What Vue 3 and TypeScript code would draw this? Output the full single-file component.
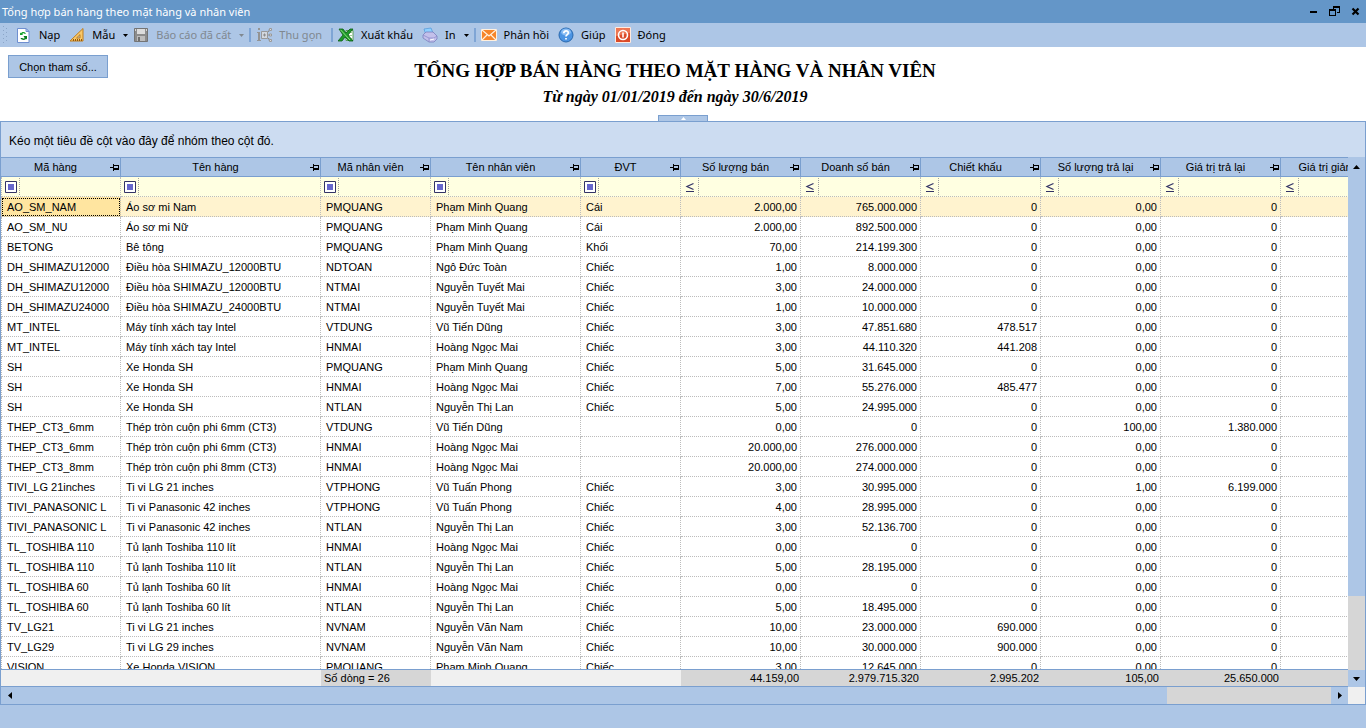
<script setup lang="ts">
interface ToolItem {
  id: string
  label: string
  caret?: boolean
  disabled?: boolean
  separator?: boolean
}
interface Column {
  key: string
  label: string
  width: number
  numeric?: boolean
}
type Row = string[]

const tools: ToolItem[] = [
  { id: 'reload', label: 'Nạp' },
  { id: 'template', label: 'Mẫu', caret: true },
  { id: 'saved', label: 'Báo cáo đã cất', caret: true, disabled: true },
  { id: 'collapse', label: 'Thu gọn', disabled: true, separator: true },
  { id: 'export', label: 'Xuất khẩu', separator: true },
  { id: 'print', label: 'In', caret: true },
  { id: 'feedback', label: 'Phản hồi', separator: true },
  { id: 'help', label: 'Giúp' },
  { id: 'close', label: 'Đóng' },
]

const columns: Column[] = [
  { key: 'item', label: 'Mã hàng', width: 120 },
  { key: 'name', label: 'Tên hàng', width: 200 },
  { key: 'staff', label: 'Mã nhân viên', width: 110 },
  { key: 'staffName', label: 'Tên nhân viên', width: 150 },
  { key: 'unit', label: 'ĐVT', width: 100 },
  { key: 'qty', label: 'Số lượng bán', width: 120, numeric: true },
  { key: 'sales', label: 'Doanh số bán', width: 120, numeric: true },
  { key: 'discount', label: 'Chiết khấu', width: 120, numeric: true },
  { key: 'retQty', label: 'Số lượng trả lại', width: 120, numeric: true },
  { key: 'retValue', label: 'Giá trị trả lại', width: 120, numeric: true },
  { key: 'reduction', label: 'Giá trị giảm giá', width: 120, numeric: true },
]

const source = `AO_SM_NAM|Áo sơ mi Nam|PMQUANG|Phạm Minh Quang|Cái|2.000,00|765.000.000|0|0,00|0
AO_SM_NU|Áo sơ mi Nữ|PMQUANG|Phạm Minh Quang|Cái|2.000,00|892.500.000|0|0,00|0
BETONG|Bê tông|PMQUANG|Phạm Minh Quang|Khối|70,00|214.199.300|0|0,00|0
DH_SHIMAZU12000|Điều hòa SHIMAZU_12000BTU|NDTOAN|Ngô Đức Toàn|Chiếc|1,00|8.000.000|0|0,00|0
DH_SHIMAZU12000|Điều hòa SHIMAZU_12000BTU|NTMAI|Nguyễn Tuyết Mai|Chiếc|3,00|24.000.000|0|0,00|0
DH_SHIMAZU24000|Điều hòa SHIMAZU_24000BTU|NTMAI|Nguyễn Tuyết Mai|Chiếc|1,00|10.000.000|0|0,00|0
MT_INTEL|Máy tính xách tay Intel|VTDUNG|Vũ Tiến Dũng|Chiếc|3,00|47.851.680|478.517|0,00|0
MT_INTEL|Máy tính xách tay Intel|HNMAI|Hoàng Ngọc Mai|Chiếc|3,00|44.110.320|441.208|0,00|0
SH|Xe Honda SH|PMQUANG|Phạm Minh Quang|Chiếc|5,00|31.645.000|0|0,00|0
SH|Xe Honda SH|HNMAI|Hoàng Ngọc Mai|Chiếc|7,00|55.276.000|485.477|0,00|0
SH|Xe Honda SH|NTLAN|Nguyễn Thị Lan|Chiếc|5,00|24.995.000|0|0,00|0
THEP_CT3_6mm|Thép tròn cuộn phi 6mm (CT3)|VTDUNG|Vũ Tiến Dũng||0,00|0|0|100,00|1.380.000
THEP_CT3_6mm|Thép tròn cuộn phi 6mm (CT3)|HNMAI|Hoàng Ngọc Mai||20.000,00|276.000.000|0|0,00|0
THEP_CT3_8mm|Thép tròn cuộn phi 8mm (CT3)|HNMAI|Hoàng Ngọc Mai||20.000,00|274.000.000|0|0,00|0
TIVI_LG 21inches|Ti vi LG 21 inches|VTPHONG|Vũ Tuấn Phong|Chiếc|3,00|30.995.000|0|1,00|6.199.000
TIVI_PANASONIC L|Ti vi Panasonic 42 inches|VTPHONG|Vũ Tuấn Phong|Chiếc|4,00|28.995.000|0|0,00|0
TIVI_PANASONIC L|Ti vi Panasonic 42 inches|NTLAN|Nguyễn Thị Lan|Chiếc|3,00|52.136.700|0|0,00|0
TL_TOSHIBA 110|Tủ lạnh Toshiba 110 lít|HNMAI|Hoàng Ngọc Mai|Chiếc|0,00|0|0|0,00|0
TL_TOSHIBA 110|Tủ lạnh Toshiba 110 lít|NTLAN|Nguyễn Thị Lan|Chiếc|5,00|28.195.000|0|0,00|0
TL_TOSHIBA 60|Tủ lạnh Toshiba 60 lít|HNMAI|Hoàng Ngọc Mai|Chiếc|0,00|0|0|0,00|0
TL_TOSHIBA 60|Tủ lạnh Toshiba 60 lít|NTLAN|Nguyễn Thị Lan|Chiếc|5,00|18.495.000|0|0,00|0
TV_LG21|Ti vi LG 21 inches|NVNAM|Nguyễn Văn Nam|Chiếc|10,00|23.000.000|690.000|0,00|0
TV_LG29|Ti vi LG 29 inches|NVNAM|Nguyễn Văn Nam|Chiếc|10,00|30.000.000|900.000|0,00|0
VISION|Xe Honda VISION|PMQUANG|Phạm Minh Quang|Chiếc|3,00|12.645.000|0|0,00|0`

const rows: Row[] = source.split('\n').map((line) => [...line.split('|'), ''])
const totals: Row = ['', '', 'Số dòng = 26', '', '', '44.159,00', '2.979.715.320', '2.995.202', '105,00', '25.650.000', '']
</script>

<template>
  <main class="window">
    <header class="titlebar">
      <span class="caption">Tổng hợp bán hàng theo mặt hàng và nhân viên</span>
      <button class="win" type="button" aria-label="Thu nhỏ">
        <svg width="11" height="11" viewBox="0 0 11 11"><path d="M2 5h7v2H2z" /></svg>
      </button>
      <button class="win" type="button" aria-label="Khôi phục">
        <svg width="11" height="11" viewBox="0 0 11 11"><path fill-rule="evenodd" d="M4 0h7v7H8V6h2V2H5v1H4zM0 3h7v7H0zM1 5v4h5V5z" /></svg>
      </button>
      <button class="win" type="button" aria-label="Đóng cửa sổ">
        <svg width="11" height="11" viewBox="0 0 11 11"><path d="M2.500 2.500L8.500 8.500M8.500 2.500L2.500 8.500" stroke="#000" stroke-width="2.200" /></svg>
      </button>
    </header>

    <nav class="toolbar" aria-label="Thanh công cụ">
      <svg class="grip" width="8" height="20" viewBox="0 0 8 20" fill="#8ba5c8">
        <path d="M3 1h1v1H3zM6 3h1v1H6zM3 5h1v1H3zM6 7h1v1H6zM3 9h1v1H3zM6 11h1v1H6zM3 13h1v1H3zM6 15h1v1H6zM3 17h1v1H3z" />
      </svg>
      <template v-for="t in tools" :key="t.id">
        <span v-if="t.separator" class="sep"></span>
        <button type="button" class="tool" :class="{ drop: t.caret }" :disabled="t.disabled">
          <svg class="icon" width="16" height="16" viewBox="0 0 16 16">
            <template v-if="t.id === 'reload'">
              <path d="M1.500 1.500h8.500l3 3v11H1.500z" fill="#fff" stroke="#6f8fd0" />
              <path d="M10 1.500v3h3z" fill="#c4d6f4" stroke="#6f8fd0" />
              <path d="M4 8V5.500l1 .8C6 4.600 9 4.600 10 6.800H8.300C7.500 6 6.600 6.300 6.300 7L7 8z" fill="#12a02c" />
              <path d="M11 9v3.500l-1-.8c-1 1.700-4.500 1.700-5.500-.8h1.900c.7.9 1.800.7 2.200 0L7.500 9z" fill="#067c1e" />
            </template>
            <template v-else-if="t.id === 'template'">
              <path d="M1 14L14 1.500V14z" fill="#f8c869" stroke="#c07d1b" />
              <path d="M7.500 11L11 7.600V11z" fill="#adc6e6" stroke="#c07d1b" />
              <path d="M4.500 14v-2M6.500 14v-2M8.500 14v-2M10.500 14v-2M12.500 14v-2" stroke="#93570a" />
            </template>
            <template v-else-if="t.id === 'saved'">
              <path d="M1.500 1.500h13v13h-13z" fill="#8c8c8c" stroke="#747474" />
              <path d="M4 2h8v5H4z" fill="#dcdcdc" />
              <path d="M4 9h8v5H4z" fill="#bdbdbd" />
              <path d="M5 10h2v4H5z" fill="#6f6f6f" />
              <path d="M2 2h1v2H2zM13 2h1v2h-1z" fill="#d5d5d5" />
            </template>
            <template v-else-if="t.id === 'collapse'">
              <path d="M2 1h2v2H2zM1 5h3v8h1v1H1v-1h1V6H1z" fill="#949494" />
              <path d="M5.500 4.500h6v7h-6z" fill="#d3d8df" stroke="#999" />
              <path d="M7 8h3M8.500 6.500v3M12 8h1.500M12 4.500h1V2.500h1M12 11.500h1v2h1" fill="none" stroke="#8c8c8c" />
              <path d="M13.500 1.500h2v2h-2zM13.500 7h2v2h-2zM13.500 12.500h2v2h-2z" fill="#ddd" stroke="#999" />
            </template>
            <template v-else-if="t.id === 'export'">
              <path d="M8 3.500h7v10H8z" fill="#fff" stroke="#5a9e5a" />
              <path d="M9 5.500h5M9 8.500h5M9 11.500h5" stroke="#9fcf9a" />
              <path d="M1 2h4l3 4 4-4h3l-5 6 5 6h-4l-4-4-3 4H0l5-6z" fill="#1f9a2b" stroke="#0b5e14" stroke-width=".8" />
              <path d="M2.500 2.800L12 13" stroke="#8be07e" />
            </template>
            <template v-else-if="t.id === 'print'">
              <path d="M2 2l7-1 2 5-7 2z" fill="#8fd0ff" stroke="#5b9ddb" stroke-width=".8" />
              <path d="M1 8l3-3 7 0 4 4v3l-3 3H7l-6-4z" fill="#c3c0ea" stroke="#7a7dbd" stroke-width=".8" />
              <path d="M1 8l6 3h5l3-2M7 11v4" fill="none" stroke="#8b8ccb" stroke-width=".8" />
              <path d="M8 13l4-1" stroke="#fff" />
            </template>
            <template v-else-if="t.id === 'feedback'">
              <path d="M.5 2.500h15v11H.5z" fill="#f6852a" stroke="#fff0de" />
              <path d="M1 3l7 6 7-6M1 13l5-5M15 13l-5-5" fill="none" stroke="#fff1df" stroke-width="1.200" />
            </template>
            <template v-else-if="t.id === 'help'">
              <circle cx="8" cy="8" r="7" fill="#4c94e3" stroke="#2868ae" />
              <ellipse cx="8" cy="5" rx="5" ry="3.500" fill="#88bcf4" />
              <path d="M5.800 6.200C5.800 3 10.500 3.200 10.300 6 10.200 7.500 8 7.700 8 9.500M8 11v1.600" fill="none" stroke="#fff" stroke-width="1.700" />
            </template>
            <template v-else>
              <path d="M.5.5h15v15H.5z" fill="#db4a28" stroke="#ffeadf" />
              <path d="M1 1h14v5L1 9z" fill="#ed7653" />
              <circle cx="8" cy="8" r="4.500" fill="none" stroke="#fff" stroke-width="1.600" />
              <path d="M8 5.500v5" stroke="#fff" stroke-width="1.600" />
            </template>
          </svg>
          <span>{{ t.label }}</span>
          <svg v-if="t.caret" class="caret" width="5" height="3" viewBox="0 0 5 3"><path d="M0 0h5L2.500 3z" fill="currentColor" /></svg>
        </button>
      </template>
    </nav>

    <section class="report-head">
      <button type="button" class="params">Chọn tham số...</button>
      <div class="headings">
        <h1>TỔNG HỢP BÁN HÀNG THEO MẶT HÀNG VÀ NHÂN VIÊN</h1>
        <p>Từ ngày 01/01/2019 đến ngày 30/6/2019</p>
      </div>
      <button type="button" class="fold" aria-label="Thu gọn tiêu đề">
        <svg width="5" height="3" viewBox="0 0 5 3"><path d="M0 3h5L2.500 0z" fill="#fff" /></svg>
      </button>
    </section>

    <section class="grid">
      <div class="group-panel">Kéo một tiêu đề cột vào đây để nhóm theo cột đó.</div>
      <div class="view">
        <table class="data">
          <colgroup><col v-for="c in columns" :key="c.key" :style="{ width: c.width + 'px' }" /></colgroup>
          <thead>
            <tr class="heads">
              <th v-for="c in columns" :key="c.key" scope="col">
                <div class="head">
                  <span>{{ c.label }}</span>
                  <svg width="9" height="7" viewBox="0 0 9 7"><path fill-rule="evenodd" d="M0 3h3V0h1v1h5v5H4v1H3V4H0zM4 2v2h4V2z" /></svg>
                </div>
              </th>
            </tr>
            <tr class="filters">
              <td v-for="c in columns" :key="c.key">
                <div class="filter">
                  <button type="button" :aria-label="'Điều kiện lọc ' + c.label">
                    <svg v-if="c.numeric" width="12" height="12" viewBox="0 0 12 12" fill="none" stroke="#333366">
                      <path d="M9.500 2.500L3 5.500l6.500 3" stroke-width="1.300" /><path d="M2 10.500h8" />
                    </svg>
                    <svg v-else width="12" height="12" viewBox="0 0 12 12">
                      <path d="M.5.5h11v11H.5z" fill="#fff" stroke="#333366" /><path d="M3 3h6v6H3z" fill="#6666cc" />
                    </svg>
                  </button>
                  <input type="text" :aria-label="'Lọc ' + c.label" />
                </div>
              </td>
            </tr>
          </thead>
          <tbody>
            <tr v-for="(r, i) in rows" :key="i" :class="{ selected: i === 0 }">
              <td v-for="(c, j) in columns" :key="c.key" :class="{ num: c.numeric, focus: i === 0 && j === 0 }">{{ r[j] }}</td>
            </tr>
          </tbody>
        </table>
      </div>
      <div class="vscroll">
        <button type="button" class="up" aria-label="Cuộn lên">
          <svg width="7" height="4" viewBox="0 0 7 4"><path d="M0 4h7L3.500 0z" /></svg>
        </button>
        <div class="vtrack"><div class="vthumb"></div></div>
        <button type="button" class="down" aria-label="Cuộn xuống">
          <svg width="7" height="4" viewBox="0 0 7 4"><path d="M0 0h7L3.500 4z" /></svg>
        </button>
      </div>
      <div class="summary">
        <table class="sums">
          <colgroup><col v-for="c in columns" :key="c.key" :style="{ width: c.width + 'px' }" /></colgroup>
          <tbody>
            <tr>
              <td v-for="(c, j) in columns" :key="c.key" :class="{ num: c.numeric, filled: c.numeric || totals[j] !== '' }">{{ totals[j] }}</td>
            </tr>
          </tbody>
        </table>
      </div>
      <div class="hscroll">
        <button type="button" aria-label="Cuộn trái">
          <svg width="4" height="7" viewBox="0 0 4 7"><path d="M4 0v7L0 3.500z" /></svg>
        </button>
        <div class="htrack"><div class="hthumb"></div></div>
        <button type="button" aria-label="Cuộn phải">
          <svg width="4" height="7" viewBox="0 0 4 7"><path d="M0 0v7L4 3.500z" /></svg>
        </button>
      </div>
      <div class="corner"></div>
    </section>
  </main>
</template>

<style>
body {
  margin: 0;
  overflow: hidden;
}
</style>

<style scoped>
.window {
  box-sizing: border-box;
  display: flex;
  flex-direction: column;
  height: 100vh;
  padding-bottom: 23px;
  background: #adc6e6;
  color: #000;
  font: 11px/16px "Liberation Sans", Arial, sans-serif;
}
button {
  margin: 0;
  padding: 0;
  border: 0;
  background: none;
  color: inherit;
  font: inherit;
}
svg {
  display: block;
  flex: none;
}
.titlebar {
  display: flex;
  align-items: center;
  gap: 10px;
  height: 23px;
  padding: 0 5px 0 2px;
  background: #6496c8;
  color: #fff;
  font: 11px/20px "Noto Sans", sans-serif;
}
.caption {
  flex: 1;
}
.toolbar {
  display: flex;
  align-items: center;
  height: 24px;
  font: 11px/20px "Noto Sans", sans-serif;
}
.grip {
  margin-right: 8px;
}
.tool {
  display: flex;
  align-items: center;
  margin-right: 9px;
  white-space: nowrap;
}
.tool.drop {
  margin-right: 5px;
}
.tool .icon {
  margin-right: 7px;
}
.tool:disabled {
  color: #808890;
}
.caret {
  margin-left: 8px;
}
.sep {
  width: 2px;
  height: 14px;
  margin-right: 5px;
  background: #7fa5d5;
}
.report-head {
  position: relative;
  flex: none;
  height: 74px;
  background: #fff;
}
.params {
  position: absolute;
  left: 8px;
  top: 8px;
  width: 100px;
  height: 23px;
  border: 1px solid #7a9fcf;
  background: #adc6e6;
}
.headings {
  padding: 12px 16px 0 0;
  text-align: center;
  font-family: "Liberation Serif", serif;
}
h1 {
  margin: 0;
  font-size: 19px;
  line-height: 24px;
}
p {
  margin: 0;
  padding-top: 4px;
  font-size: 16px;
  line-height: 20px;
  font-style: italic;
  font-weight: bold;
}
.fold {
  position: absolute;
  bottom: 0;
  left: calc(50% - 25px);
  display: flex;
  align-items: center;
  justify-content: center;
  width: 50px;
  height: 6px;
  border: 1px solid #7a9fcf;
  border-bottom: 0;
  background: #adc6e6;
}
.grid {
  flex: 1;
  min-height: 0;
  display: grid;
  grid-template-columns: minmax(0, 1fr) 17px;
  grid-template-rows: 35px minmax(0, 1fr) 18px 17px;
  border: 1px solid #7a9fcf;
}
.group-panel {
  grid-column: 1 / 3;
  padding: 11px 8px 0;
  background: #ccdcf1;
  font-size: 12px;
}
.view {
  overflow: hidden;
  background: #fff;
}
table {
  width: 1320px;
  table-layout: fixed;
  border-collapse: separate;
  border-spacing: 0;
  text-align: left;
}
td,
th {
  box-sizing: border-box;
  overflow: hidden;
  padding: 0;
  white-space: nowrap;
  font-weight: normal;
}
th {
  height: 20px;
  border: solid #7a9fcf;
  border-width: 1px 1px 1px 0;
  background: #adc6e6;
}
.head {
  display: flex;
  align-items: center;
  padding-right: 1px;
}
.head span {
  flex: 1;
  overflow: hidden;
  text-align: center;
}
.data td {
  height: 20px;
  padding: 2px 3px 1px 5px;
  border: dotted #bcbcbc;
  border-width: 0 1px 1px 0;
}
.data tr td:first-child {
  border-left-width: 1px;
}
.data .filters td {
  padding: 0 0 0 3px;
  background: #ffffe1;
}
.filter {
  display: flex;
  align-items: center;
  height: 19px;
}
.filter button {
  height: 14px;
}
.filter input {
  flex: 1;
  min-width: 0;
  height: 17px;
  margin-left: 2px;
  padding: 0 2px;
  border: 0;
  border-left: 1px dotted #a0a0a0;
  background: none;
  font: inherit;
}
.selected td {
  background: #fff3cf;
}
.data .selected .focus {
  background: #ffe5a0;
  outline: 1px dotted #000;
  outline-offset: -2px;
}
.num {
  text-align: right;
}
.vscroll {
  grid-row: 2 / 4;
  grid-column: 2;
  display: flex;
  flex-direction: column;
  background: #adc6e6;
}
.vscroll button,
.hscroll button {
  display: flex;
  align-items: center;
  justify-content: center;
  flex: none;
  width: 17px;
  height: 17px;
}
.vscroll .up {
  height: 20px;
}
.vtrack {
  flex: 1;
  background: #d6d6d6;
}
.vthumb {
  height: 85%;
  background: #adc6e6;
}
.summary {
  grid-column: 1;
  overflow: hidden;
  border: solid #7a9fcf;
  border-width: 1px 0;
  background: #f0f0f0;
}
.sums td {
  height: 16px;
  padding: 0 2px 0 3px;
}
.sums .filled {
  background: #d6d6d6;
}
.hscroll {
  display: flex;
  background: #adc6e6;
}
.htrack {
  flex: 1;
  background: #d6d6d6;
}
.hthumb {
  width: 87.5%;
  height: 100%;
  background: #adc6e6;
}
.corner {
  background: #f0f0f0;
}
</style>
